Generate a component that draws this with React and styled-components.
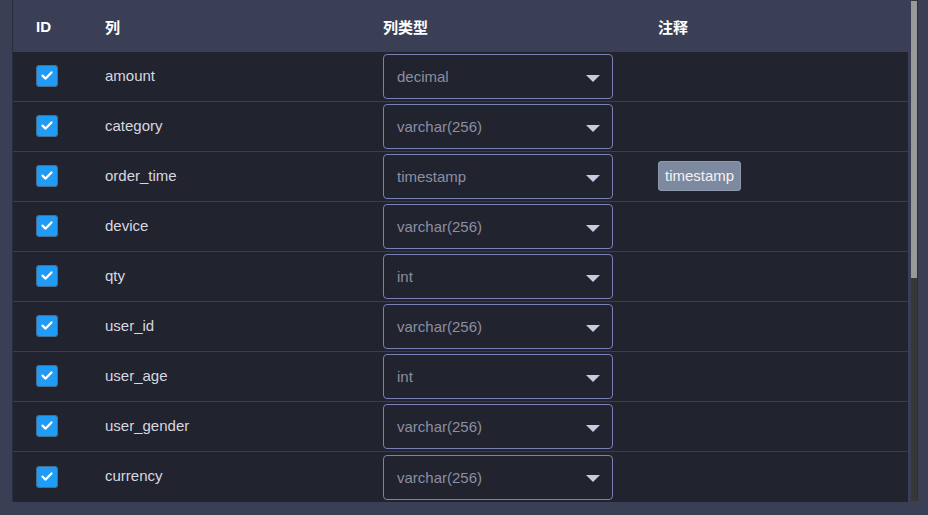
import styled, { createGlobalStyle } from "styled-components";

const Global = createGlobalStyle`
  body {
    margin: 0;
    background: #3a3f55;
    font-family: "Liberation Sans", "Noto Sans CJK SC", sans-serif;
  }
`;

const Page = styled.div`
  height: 515px;
  padding-left: 12px;
  box-sizing: border-box;
`;

const Frame = styled.div`
  width: 906px;
  height: 502px;
  display: flex;
  border-left: 1px solid #2a2d3c;
  box-sizing: border-box;
`;

const Table = styled.div`
  flex: 1;
  overflow: hidden;
`;

const ScrollTrack = styled.div`
  width: 6px;
  margin: 0 0 1px 3px;
  background: #373737;
  border-right: 1px solid #2a2d3c;
  display: flex;
  flex-direction: column;
`;

const ScrollThumb = styled.div`
  margin-top: 1px;
  height: 277px;
  background: #999999;
`;

const Row = styled.div`
  display: grid;
  grid-template-columns: 69px 278px 275px 1fr;
  align-items: center;
  height: 50px;
  box-sizing: border-box;
  background: #21232f;
  border-bottom: 1px solid #3a3e52;

  &:last-child {
    border-bottom: none;
  }
`;

const Head = styled(Row)`
  height: 52px;
  background: #3a3f55;
  border-bottom: none;
`;

const HeadCell = styled.div`
  padding-left: 23px;
  color: #ffffff;
  font-size: 15px;
  font-weight: 700;
`;

const Cell = styled.div`
  padding-left: 23px;
  color: #d7d8e0;
  font-size: 15px;
  display: flex;
  align-items: center;
  margin-top: ${(p) => p.$lift || 0}px;
`;

const Check = styled.span`
  width: 22px;
  height: 22px;
  border-radius: 4px;
  background: #1f9cf7;
  box-shadow: inset 0 0 0 1px #4a6c8c;
  display: flex;
  align-items: center;
  justify-content: center;
`;

const Select = styled.div`
  width: 230px;
  height: 45px;
  box-sizing: border-box;
  border: 1px solid #7a7fb6;
  border-radius: 4px;
  padding: 0 12px 0 13px;
  display: flex;
  align-items: center;
  justify-content: space-between;
  color: #8b8fa3;
  font-size: 15px;
`;

const Arrow = styled.span`
  width: 0;
  height: 0;
  border-left: 7px solid transparent;
  border-right: 7px solid transparent;
  border-top: 7px solid #c6cbe0;
  margin-top: 3px;
`;

const Tag = styled.span`
  background: #7d899f;
  color: #f2f3f6;
  border-radius: 4px;
  padding: 6px 7px 7px;
  font-size: 15px;
  box-shadow: inset 0 0 0 1px #8e99ad;
`;

const rows = [
  ["amount", "decimal"],
  ["category", "varchar(256)"],
  ["order_time", "timestamp", "timestamp"],
  ["device", "varchar(256)"],
  ["qty", "int"],
  ["user_id", "varchar(256)"],
  ["user_age", "int"],
  ["user_gender", "varchar(256)"],
  ["currency", "varchar(256)"],
];

export default function App() {
  return (
    <Page>
      <Global />
      <Frame>
        <Table>
          <Head>
            <HeadCell>ID</HeadCell>
            <HeadCell>列</HeadCell>
            <HeadCell>列类型</HeadCell>
            <HeadCell>注释</HeadCell>
          </Head>
          {rows.map(([name, type, note]) => (
            <Row key={name}>
              <Cell $lift={-1}>
                <Check>
                  <svg width="14" height="14" viewBox="0 0 14 14">
                    <path
                      d="M2.5 6.6 L5.6 9.6 L11.5 3.4"
                      fill="none"
                      stroke="#fff"
                      strokeWidth="2.2"
                      strokeLinecap="round"
                      strokeLinejoin="round"
                    />
                  </svg>
                </Check>
              </Cell>
              <Cell $lift={-3}>{name}</Cell>
              <Cell>
                <Select>
                  {type}
                  <Arrow />
                </Select>
              </Cell>
              <Cell $lift={-1}>{note && <Tag>{note}</Tag>}</Cell>
            </Row>
          ))}
        </Table>
        <ScrollTrack>
          <ScrollThumb />
        </ScrollTrack>
      </Frame>
    </Page>
  );
}
